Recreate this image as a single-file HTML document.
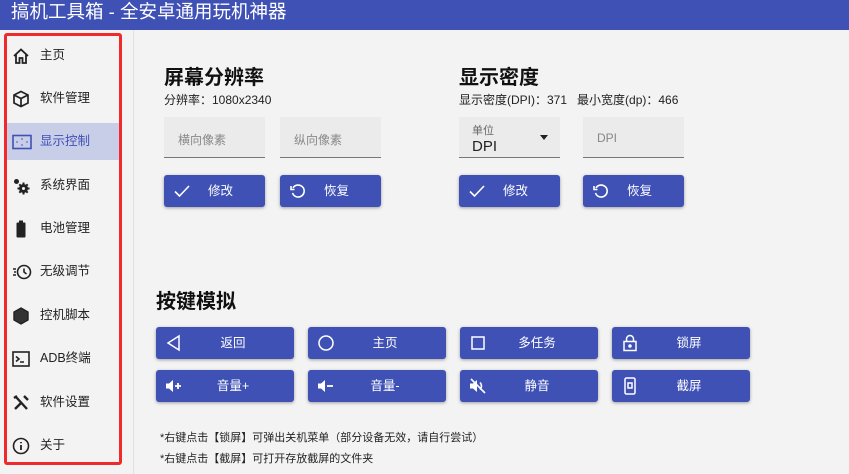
<!DOCTYPE html>
<html><head><meta charset="utf-8"><style>
*{box-sizing:border-box;margin:0;padding:0}
body{width:849px;height:474px;overflow:hidden;background:#f3f3f3;font-family:"Liberation Sans","Noto Sans CJK SC",sans-serif;position:relative;color:#222}
.title{position:absolute;left:0;top:0;width:849px;height:30px;background:#3f51b5;color:#fff;font-size:18.5px;line-height:24px;padding-left:11px}
.side{position:absolute;left:4px;top:33px;width:118px;height:432px;border:3px solid #f02a2a;border-radius:3px}
.divider{position:absolute;left:133px;top:30px;width:1px;height:444px;background:#e0e0e0}
.item{position:absolute;left:7px;width:115px;height:37px;font-size:12.5px;line-height:37px;padding-left:33px;color:#222}
.item svg{position:absolute;left:5px;top:10px}
.sel{background:#c8cde8;color:#3f51b5}
.h{position:absolute;font-size:20px;font-weight:bold;color:#111}
.sub{position:absolute;font-size:12px;color:#222}
.inp{position:absolute;width:101px;height:41px;background:#ebebeb;border-bottom:1px solid #777;font-size:12px;color:#888;padding:14px 0 0 14px}
.btn{position:absolute;height:32px;background:#3f51b5;border-radius:3px;box-shadow:0 1px 3px rgba(0,0,0,.35);color:#fff;font-size:12.5px;line-height:32px}
.btn svg{position:absolute;left:9px;top:7px}
.btn span{position:absolute;left:0;right:0;text-align:center}
.note{position:absolute;left:160px;font-size:11px;color:#222}
</style></head><body>
<div class="title">搞机工具箱 - 全安卓通用玩机神器</div>
<div class="divider"></div>
<div class="item" style="top:37px"><svg width="18" height="18" viewBox="0 0 18 18" fill="none" stroke="#222" stroke-width="1.8"><path d="M2 9L9 2.5 16 9M4 7.5V16h3.5v-5h3v5H14V7.5"/></svg>主页</div>
<div class="item" style="top:80px"><svg width="18" height="18" viewBox="0 0 18 18" fill="none" stroke="#222" stroke-width="1.7"><path d="M9 1.5L16 5v8l-7 3.5L2 13V5z M2 5l7 3.5L16 5 M9 8.5V16.5"/></svg>软件管理</div>
<div class="item sel" style="top:123px"><svg width="20" height="18" viewBox="0 0 20 18" fill="none" stroke="#3f51b5" stroke-width="1.6"><rect x="1" y="2.5" width="18" height="13"/><path d="M4.5 9h1M14.5 9h1M10 5.5v1M10 11.5v1" stroke-width="1.8"/></svg>显示控制</div>
<div class="item" style="top:167px"><svg width="18" height="18" viewBox="0 0 18 18" fill="#222"><circle cx="4.5" cy="4.5" r="2.5"/><circle cx="11.5" cy="11.5" r="4.5"/><path d="M11.5 5.5v12M5.5 11.5h12M7.3 7.3l8.4 8.4M15.7 7.3l-8.4 8.4" stroke="#222" stroke-width="2"/><circle cx="11.5" cy="11.5" r="1.5" fill="#f3f3f3"/></svg>系统界面</div>
<div class="item" style="top:210px"><svg width="18" height="18" viewBox="0 0 18 18" fill="#222"><rect x="7" y="0.5" width="4" height="2"/><rect x="4.5" y="2.5" width="9" height="15" rx="1"/></svg>电池管理</div>
<div class="item" style="top:253px"><svg width="20" height="18" viewBox="0 0 20 18" fill="none" stroke="#222" stroke-width="1.6"><circle cx="12" cy="9" r="6.5"/><path d="M12 5.5V9l2.5 2M1 6h3M1 12h3M2 9h2"/></svg>无级调节</div>
<div class="item" style="top:297px"><svg width="18" height="18" viewBox="0 0 18 18" fill="#333" stroke="#222" stroke-width="1.4"><path d="M9 1l7 4v8l-7 4-7-4V5z"/></svg>控机脚本</div>
<div class="item" style="top:340px"><svg width="18" height="18" viewBox="0 0 18 18" fill="none" stroke="#222" stroke-width="1.6"><rect x="1" y="2" width="16" height="14"/><path d="M4 6.5l3 2.5-3 2.5M8 12h4"/></svg>ADB终端</div>
<div class="item" style="top:384px"><svg width="18" height="18" viewBox="0 0 18 18" fill="none" stroke="#222" stroke-width="2.4"><path d="M3 15L10 8M4 3l11 12M2 4l3-2M12 2l4 4"/></svg>软件设置</div>
<div class="item" style="top:427px"><svg width="18" height="18" viewBox="0 0 18 18" fill="none" stroke="#222" stroke-width="1.6"><circle cx="9" cy="9" r="7.5"/><path d="M9 8v5M9 5v1.2" stroke-width="1.8"/></svg>关于</div>
<div class="side"></div>

<div class="h" style="left:164px;top:61px">屏幕分辨率</div>
<div class="sub" style="left:164px;top:91px">分辨率：1080x2340</div>
<div class="inp" style="left:164px;top:117px">横向像素</div>
<div class="inp" style="left:280px;top:117px">纵向像素</div>
<div class="btn" style="left:164px;top:175px;width:101px"><svg width="18" height="18" viewBox="0 0 18 18" fill="none" stroke="#fff" stroke-width="1.6"><path d="M2 9.5l4.5 4.5L16 4"/></svg><span style="padding-left:12px">修改</span></div>
<div class="btn" style="left:280px;top:175px;width:101px"><svg width="18" height="18" viewBox="0 0 18 18" fill="none" stroke="#fff" stroke-width="1.6"><path d="M4 6A6 6 0 1 1 3.5 11"/><path d="M2 4v3.5h3.5" /></svg><span style="padding-left:12px">恢复</span></div>

<div class="h" style="left:459px;top:61px">显示密度</div>
<div class="sub" style="left:459px;top:91px">显示密度(DPI)：371&nbsp;&nbsp;&nbsp;最小宽度(dp)：466</div>
<div class="inp" style="left:459px;top:117px;padding:5px 0 0 13px;color:#222"><div style="font-size:11px;color:#666">单位</div><div style="font-size:15px">DPI</div><div style="position:absolute;right:12px;top:18px;border:4px solid transparent;border-top:5px solid #222"></div></div>
<div class="inp" style="left:583px;top:117px">DPI</div>
<div class="btn" style="left:459px;top:175px;width:101px"><svg width="18" height="18" viewBox="0 0 18 18" fill="none" stroke="#fff" stroke-width="1.6"><path d="M2 9.5l4.5 4.5L16 4"/></svg><span style="padding-left:12px">修改</span></div>
<div class="btn" style="left:583px;top:175px;width:101px"><svg width="18" height="18" viewBox="0 0 18 18" fill="none" stroke="#fff" stroke-width="1.6"><path d="M4 6A6 6 0 1 1 3.5 11"/><path d="M2 4v3.5h3.5"/></svg><span style="padding-left:12px">恢复</span></div>

<div class="h" style="left:156px;top:285px">按键模拟</div>
<div class="btn" style="left:156px;top:327px;width:138px"><svg width="18" height="18" viewBox="0 0 18 18" fill="none" stroke="#fff" stroke-width="1.5"><path d="M14 2L3 9l11 7z"/></svg><span style="padding-left:16px">返回</span></div>
<div class="btn" style="left:308px;top:327px;width:138px"><svg width="18" height="18" viewBox="0 0 18 18" fill="none" stroke="#fff" stroke-width="1.5"><circle cx="9" cy="9" r="7"/></svg><span style="padding-left:16px">主页</span></div>
<div class="btn" style="left:460px;top:327px;width:138px"><svg width="18" height="18" viewBox="0 0 18 18" fill="none" stroke="#fff" stroke-width="1.5"><rect x="3" y="3" width="12" height="12"/></svg><span style="padding-left:16px">多任务</span></div>
<div class="btn" style="left:612px;top:327px;width:138px"><svg width="18" height="18" viewBox="0 0 18 18" fill="none" stroke="#fff" stroke-width="1.5"><rect x="3" y="7.5" width="12" height="9"/><path d="M5.5 7.5V5a3.5 3.5 0 0 1 7 0v2.5"/><circle cx="9" cy="12" r="1" fill="#fff"/></svg><span style="padding-left:16px">锁屏</span></div>
<div class="btn" style="left:156px;top:370px;width:138px"><svg width="18" height="18" viewBox="0 0 18 18" fill="#fff"><path d="M1 6.5h3l4-3.5v12l-4-3.5H1z"/><path d="M10 9h6M13 6v6" stroke="#fff" stroke-width="1.8"/></svg><span style="padding-left:16px">音量+</span></div>
<div class="btn" style="left:308px;top:370px;width:138px"><svg width="18" height="18" viewBox="0 0 18 18" fill="#fff"><path d="M1 6.5h3l4-3.5v12l-4-3.5H1z"/><path d="M10 9h6" stroke="#fff" stroke-width="1.8"/></svg><span style="padding-left:16px">音量-</span></div>
<div class="btn" style="left:460px;top:370px;width:138px"><svg width="18" height="18" viewBox="0 0 18 18" fill="#fff"><path d="M1 6.5h3l4-3.5v12l-4-3.5H1z"/><path d="M11 5.5a5 5 0 0 1 0 7M2 2l14 14" stroke="#fff" stroke-width="1.6" fill="none"/></svg><span style="padding-left:16px">静音</span></div>
<div class="btn" style="left:612px;top:370px;width:138px"><svg width="18" height="18" viewBox="0 0 18 18" fill="none" stroke="#fff" stroke-width="1.5"><rect x="4" y="1" width="10" height="16" rx="1.5"/><path d="M7 6h4v5H7z"/></svg><span style="padding-left:16px">截屏</span></div>

<div class="note" style="top:429px">*右键点击【锁屏】可弹出关机菜单（部分设备无效，请自行尝试）</div>
<div class="note" style="top:450px">*右键点击【截屏】可打开存放截屏的文件夹</div>
</body></html>
